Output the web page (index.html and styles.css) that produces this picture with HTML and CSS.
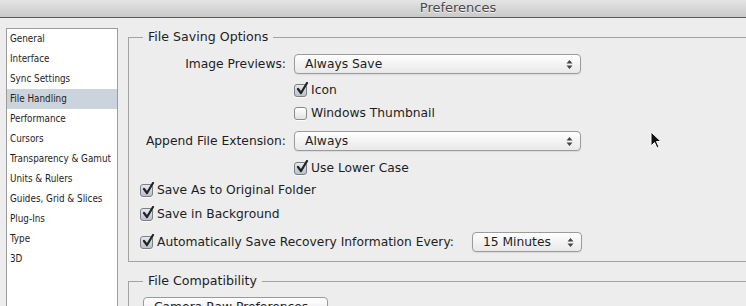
FILE: index.html
```html
<!DOCTYPE html>
<html lang="en">
  <head>
    <meta charset="UTF-8" />
    <title>Preferences</title>
    <link rel="stylesheet" href="styles.css">
  </head>
  <body>
    <div class="window">
      <div class="titlebar">Preferences</div>
      <div class="content">
        <div class="sidebar">
          <div class="item">General</div>
          <div class="item">Interface</div>
          <div class="item">Sync Settings</div>
          <div class="item selected">File Handling</div>
          <div class="item">Performance</div>
          <div class="item">Cursors</div>
          <div class="item">Transparency &amp; Gamut</div>
          <div class="item">Units &amp; Rulers</div>
          <div class="item">Guides, Grid &amp; Slices</div>
          <div class="item">Plug-Ins</div>
          <div class="item">Type</div>
          <div class="item">3D</div>
        </div>
        <div class="panes">
          <fieldset class="group saving">
            <legend>File Saving Options</legend>
            <div class="row r1">
              <span class="label">Image Previews:</span>
              <div class="select wide"><span>Always Save</span><svg class="arrows" width="7" height="11" viewBox="0 0 7 11"><path d="M3.5 1 L6.5 4.5 H0.5 Z M3.5 10 L6.5 6.5 H0.5 Z" fill="#444"/></svg></div>
            </div>
            <div class="row r2 sub">
              <span class="check on"><svg width="14" height="14" viewBox="0 0 14 14"><path d="M3 7 L6 11 L12 1" fill="none" stroke="#222" stroke-width="2.2" stroke-linecap="round" stroke-linejoin="round"/></svg></span>
              <span>Icon</span>
            </div>
            <div class="row r3 sub">
              <span class="check"></span>
              <span>Windows Thumbnail</span>
            </div>
            <div class="row r4">
              <span class="label">Append File Extension:</span>
              <div class="select wide"><span>Always</span><svg class="arrows" width="7" height="11" viewBox="0 0 7 11"><path d="M3.5 1 L6.5 4.5 H0.5 Z M3.5 10 L6.5 6.5 H0.5 Z" fill="#444"/></svg></div>
            </div>
            <div class="row r5 sub">
              <span class="check on"><svg width="14" height="14" viewBox="0 0 14 14"><path d="M3 7 L6 11 L12 1" fill="none" stroke="#222" stroke-width="2.2" stroke-linecap="round" stroke-linejoin="round"/></svg></span>
              <span>Use Lower Case</span>
            </div>
            <div class="row r6">
              <span class="check on"><svg width="14" height="14" viewBox="0 0 14 14"><path d="M3 7 L6 11 L12 1" fill="none" stroke="#222" stroke-width="2.2" stroke-linecap="round" stroke-linejoin="round"/></svg></span>
              <span>Save As to Original Folder</span>
            </div>
            <div class="row r7">
              <span class="check on"><svg width="14" height="14" viewBox="0 0 14 14"><path d="M3 7 L6 11 L12 1" fill="none" stroke="#222" stroke-width="2.2" stroke-linecap="round" stroke-linejoin="round"/></svg></span>
              <span>Save in Background</span>
            </div>
            <div class="row r8">
              <span class="check on"><svg width="14" height="14" viewBox="0 0 14 14"><path d="M3 7 L6 11 L12 1" fill="none" stroke="#222" stroke-width="2.2" stroke-linecap="round" stroke-linejoin="round"/></svg></span>
              <span class="long">Automatically Save Recovery Information Every:</span>
              <div class="select small"><span>15 Minutes</span><svg class="arrows" width="7" height="11" viewBox="0 0 7 11"><path d="M3.5 1 L6.5 4.5 H0.5 Z M3.5 10 L6.5 6.5 H0.5 Z" fill="#444"/></svg></div>
            </div>
          </fieldset>
          <fieldset class="group compat">
            <legend>File Compatibility</legend>
            <div class="select raw"><span>Camera Raw Preferences...</span></div>
          </fieldset>
        </div>
      </div>
      <svg class="cursor" width="12" height="18" viewBox="0 0 12 18"><path d="M1 1 V15 L4.5 11.5 L7 17 L9 16 L6.5 10.5 H11 Z" fill="#111" stroke="#fff" stroke-width="1"/></svg>
    </div>
  </body>
</html>
```
FILE: styles.css
```css
body {
  margin: 0;
  overflow: hidden;
  background: #ededed;
  font-family: "DejaVu Sans", sans-serif;
  color: #1e1e1e;
}
.window {
  position: relative;
  width: 916px;
  height: 306px;
  overflow: hidden;
  background: #ededed;
}
.titlebar {
  height: 17px;
  line-height: 16px;
  text-align: center;
  font-size: 13px;
  color: #4a4a4a;
  text-shadow: 0 1px 0 #f2f2f2;
  background: linear-gradient(#e4e4e4, #c9c9c9);
  border-bottom: 1px solid #5a5a5a;
}
.content {
  display: flex;
  align-items: flex-start;
}
.sidebar {
  width: 110px;
  height: 300px;
  margin: 10px 0 0 6px;
  background: #fff;
  border: 1px solid #9c9c9c;
  font-family: "DejaVu Sans Condensed", "DejaVu Sans", sans-serif;
  font-size: 9.8px;
}
.sidebar .item {
  height: 20px;
  line-height: 20px;
  padding-left: 3px;
  white-space: nowrap;
}
.sidebar .item.selected {
  background: #cbd3dc;
}
.panes {
  flex: 1;
  margin-left: 10px;
  margin-top: 11px;
}
.group {
  margin: 0;
  border: 1px solid #a3a3a3;
  border-right: none;
  padding: 9px 0 9px 11px;
  min-width: 0;
}
.group legend {
  font-size: 12.6px;
  line-height: 16px;
  padding: 0 5px;
  margin-left: 3px;
  color: #1e1e1e;
}
.row {
  display: flex;
  align-items: center;
  height: 20px;
  font-size: 12.3px;
  white-space: nowrap;
}
.row .label {
  width: 146px;
  text-align: right;
  margin-right: 8px;
}
.row.sub {
  padding-left: 154px;
}
.r2 { margin-top: 6px; }
.r3 { margin-top: 3px; }
.r4 { margin-top: 8px; }
.r5 { margin-top: 7px; }
.r6 { margin-top: 2px; }
.r7 { margin-top: 4px; }
.r8 { margin-top: 8px; }
.check {
  position: relative;
  width: 11px;
  height: 11px;
  margin-right: 4px;
  border: 1px solid #8a8a8a;
  border-radius: 3px;
  background: linear-gradient(#ffffff, #e2e2e2);
  box-shadow: 0 1px 0 rgba(255,255,255,0.7);
}
.check.on {
  background: linear-gradient(#e6e9ee, #b9c1cb);
  border-color: #7b7f86;
}
.check svg {
  position: absolute;
  left: 0;
  top: -3px;
}
.select {
  position: relative;
  box-sizing: border-box;
  height: 20px;
  display: flex;
  align-items: center;
  padding-left: 10px;
  border: 1px solid #9b9b9b;
  border-radius: 4px;
  background: linear-gradient(#ffffff, #f1f1f1 60%, #e9e9e9);
  box-shadow: 0 1px 1px rgba(0,0,0,0.08);
  font-size: 12.3px;
  white-space: nowrap;
}
.select .arrows {
  position: absolute;
  right: 7px;
  top: 4px;
}
.select.wide {
  width: 287px;
}
.select.small {
  width: 110px;
  margin-left: 18px;
}
.select.raw {
  width: 185px;
  margin-left: 3px;
  margin-top: 8px;
}
.compat {
  margin-top: 11px;
  padding-top: 0;
}
.cursor {
  position: absolute;
  left: 650px;
  top: 131px;
}
```
